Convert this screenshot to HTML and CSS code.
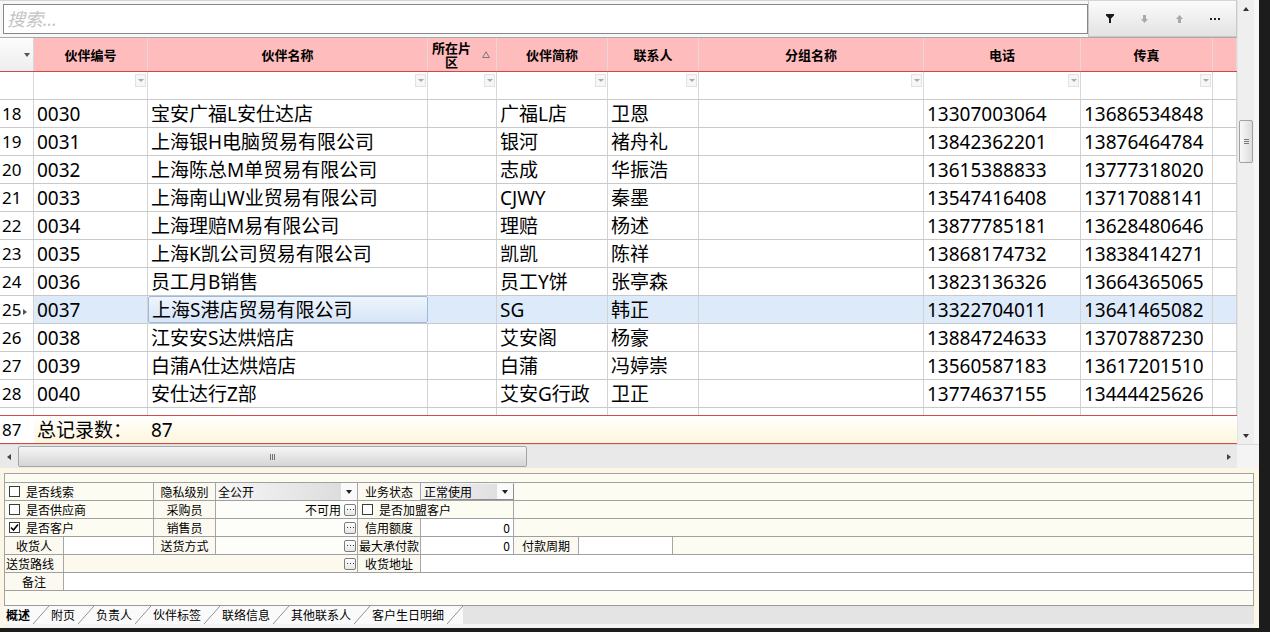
FILE: index.html
```html
<!DOCTYPE html>
<html lang="zh-CN">
<head>
  <meta charset="UTF-8">
  <title>伙伴资料</title>
  <link rel="stylesheet" href="styles.css">
</head>
<body>
<div class="app">
  <div class="upper">
    <div class="main">
      <div class="searchbar">
        <input class="search" type="text" placeholder="搜索...">
        <div class="tools">
          <span class="tb"><svg width="8" height="9" viewBox="0 0 8 9"><path d="M0 0H8V1.6L5 4.6V9H3V4.6L0 1.6Z" fill="#1a1a1a"/></svg></span>
          <span class="tb"><svg width="7" height="8" viewBox="0 0 7 8"><path d="M2 0H5V4H7L3.5 8L0 4H2Z" fill="#a9a9a9"/></svg></span>
          <span class="tb"><svg width="7" height="8" viewBox="0 0 7 8"><path d="M3.5 0L7 4H5V8H2V4H0Z" fill="#a9a9a9"/></svg></span>
          <span class="tb"><svg width="10" height="2" viewBox="0 0 10 2"><rect x="0" width="2" height="2" fill="#222"/><rect x="4" width="2" height="2" fill="#222"/><rect x="8" width="2" height="2" fill="#222"/></svg></span>
        </div>
      </div>

      <div class="grid">
        <div class="row head">
          <div class="h ind"><span class="tri-down"></span></div>
          <div class="h">伙伴编号</div>
          <div class="h">伙伴名称</div>
          <div class="h area"><span class="two">所在片<br>区</span><svg width="8" height="7" viewBox="0 0 8 7"><path d="M4 0.8L7.4 6.5H0.6Z" fill="none" stroke="#7a7a7a"/></svg></div>
          <div class="h">伙伴简称</div>
          <div class="h">联系人</div>
          <div class="h">分组名称</div>
          <div class="h">电话</div>
          <div class="h">传真</div>
          <div class="h"></div>
        </div>

        <div class="row filter">
          <div class="fc"></div>
          <div class="fc"><span class="dd"></span></div>
          <div class="fc"><span class="dd"></span></div>
          <div class="fc"><span class="dd"></span></div>
          <div class="fc"><span class="dd"></span></div>
          <div class="fc"><span class="dd"></span></div>
          <div class="fc"><span class="dd"></span></div>
          <div class="fc"><span class="dd"></span></div>
          <div class="fc"><span class="dd"></span></div>
          <div class="fc"></div>
        </div>

        <div class="body">
          <div class="row data"><div class="c num">18</div><div class="c">0030</div><div class="c">宝安广福L安仕达店</div><div class="c"></div><div class="c">广福L店</div><div class="c">卫恩</div><div class="c"></div><div class="c">13307003064</div><div class="c">13686534848</div><div class="c"></div></div>
          <div class="row data"><div class="c num">19</div><div class="c">0031</div><div class="c">上海银H电脑贸易有限公司</div><div class="c"></div><div class="c">银河</div><div class="c">褚舟礼</div><div class="c"></div><div class="c">13842362201</div><div class="c">13876464784</div><div class="c"></div></div>
          <div class="row data"><div class="c num">20</div><div class="c">0032</div><div class="c">上海陈总M单贸易有限公司</div><div class="c"></div><div class="c">志成</div><div class="c">华振浩</div><div class="c"></div><div class="c">13615388833</div><div class="c">13777318020</div><div class="c"></div></div>
          <div class="row data"><div class="c num">21</div><div class="c">0033</div><div class="c">上海南山W业贸易有限公司</div><div class="c"></div><div class="c">CJWY</div><div class="c">秦墨</div><div class="c"></div><div class="c">13547416408</div><div class="c">13717088141</div><div class="c"></div></div>
          <div class="row data"><div class="c num">22</div><div class="c">0034</div><div class="c">上海理赔M易有限公司</div><div class="c"></div><div class="c">理赔</div><div class="c">杨述</div><div class="c"></div><div class="c">13877785181</div><div class="c">13628480646</div><div class="c"></div></div>
          <div class="row data"><div class="c num">23</div><div class="c">0035</div><div class="c">上海K凯公司贸易有限公司</div><div class="c"></div><div class="c">凯凯</div><div class="c">陈祥</div><div class="c"></div><div class="c">13868174732</div><div class="c">13838414271</div><div class="c"></div></div>
          <div class="row data"><div class="c num">24</div><div class="c">0036</div><div class="c">员工月B销售</div><div class="c"></div><div class="c">员工Y饼</div><div class="c">张亭森</div><div class="c"></div><div class="c">13823136326</div><div class="c">13664365065</div><div class="c"></div></div>
          <div class="row data sel"><div class="c num">25<span class="cur"></span></div><div class="c">0037</div><div class="c focus">上海S港店贸易有限公司</div><div class="c"></div><div class="c">SG</div><div class="c">韩正</div><div class="c"></div><div class="c">13322704011</div><div class="c">13641465082</div><div class="c"></div></div>
          <div class="row data"><div class="c num">26</div><div class="c">0038</div><div class="c">江安安S达烘焙店</div><div class="c"></div><div class="c">艾安阁</div><div class="c">杨豪</div><div class="c"></div><div class="c">13884724633</div><div class="c">13707887230</div><div class="c"></div></div>
          <div class="row data"><div class="c num">27</div><div class="c">0039</div><div class="c">白蒲A仕达烘焙店</div><div class="c"></div><div class="c">白蒲</div><div class="c">冯婷崇</div><div class="c"></div><div class="c">13560587183</div><div class="c">13617201510</div><div class="c"></div></div>
          <div class="row data"><div class="c num">28</div><div class="c">0040</div><div class="c">安仕达行Z部</div><div class="c"></div><div class="c">艾安G行政</div><div class="c">卫正</div><div class="c"></div><div class="c">13774637155</div><div class="c">13444425626</div><div class="c"></div></div>
          <div class="row data"><div class="c num"></div><div class="c"></div><div class="c"></div><div class="c"></div><div class="c"></div><div class="c"></div><div class="c"></div><div class="c"></div><div class="c"></div><div class="c"></div></div>
        </div>

        <div class="row total">
          <div class="c num">87</div>
          <div class="c">总记录数：</div>
          <div class="c">87</div>
        </div>
      </div>
    </div>

    <div class="vscroll">
      <div class="sb-btn up"></div>
      <div class="vtrack">
        <div class="vthumb"><i></i><i></i><i></i></div>
      </div>
      <div class="sb-btn down"></div>
    </div>
  </div>

  <div class="hscroll">
    <div class="hs-btn left"></div>
    <div class="htrack">
      <div class="hthumb"><i></i><i></i><i></i></div>
    </div>
    <div class="hs-btn right"></div>
    <div class="corner"></div>
  </div>

  <div class="lower">
    <div class="panel">
      <div class="frow">
        <div class="f w1 chk"><span class="cb"></span>是否线索</div>
        <div class="f w2 lab">隐私级别</div>
        <div class="f w3 combo"><span>全公开</span><span class="arr"></span></div>
        <div class="f w4 lab">业务状态</div>
        <div class="f w5 combo raised"><span>正常使用</span><span class="arr"></span></div>
        <div class="f rest"></div>
      </div>
      <div class="frow">
        <div class="f w1 chk"><span class="cb"></span>是否供应商</div>
        <div class="f w2 lab">采购员</div>
        <div class="f w3 pick">不可用<span class="dots"><svg width="7" height="1" viewBox="0 0 7 1"><rect x="0" width="1" height="1" fill="#333"/><rect x="3" width="1" height="1" fill="#333"/><rect x="6" width="1" height="1" fill="#333"/></svg></span></div>
        <div class="f w45 chk"><span class="cb"></span>是否加盟客户</div>
        <div class="f rest"></div>
      </div>
      <div class="frow">
        <div class="f w1 chk"><span class="cb"><svg width="9" height="9" viewBox="0 0 9 9"><polyline points="1,4.5 3.5,7 8,1.5" fill="none" stroke="#000" stroke-width="1.6"/></svg></span>是否客户</div>
        <div class="f w2 lab">销售员</div>
        <div class="f w3 pick"><span class="dots"><svg width="7" height="1" viewBox="0 0 7 1"><rect x="0" width="1" height="1" fill="#333"/><rect x="3" width="1" height="1" fill="#333"/><rect x="6" width="1" height="1" fill="#333"/></svg></span></div>
        <div class="f w4 lab">信用额度</div>
        <div class="f w5 val">0</div>
        <div class="f rest"></div>
      </div>
      <div class="frow">
        <div class="f wa lab">收货人</div>
        <div class="f wb white"></div>
        <div class="f w2 lab">送货方式</div>
        <div class="f w3 pick"><span class="dots"><svg width="7" height="1" viewBox="0 0 7 1"><rect x="0" width="1" height="1" fill="#333"/><rect x="3" width="1" height="1" fill="#333"/><rect x="6" width="1" height="1" fill="#333"/></svg></span></div>
        <div class="f w4 lab l">最大承付款</div>
        <div class="f w5 val">0</div>
        <div class="f w6 lab">付款周期</div>
        <div class="f w7 white"></div>
        <div class="f rest"></div>
      </div>
      <div class="frow">
        <div class="f wa lab l">送货路线</div>
        <div class="f w8 pick cream"><span class="dots"><svg width="7" height="1" viewBox="0 0 7 1"><rect x="0" width="1" height="1" fill="#333"/><rect x="3" width="1" height="1" fill="#333"/><rect x="6" width="1" height="1" fill="#333"/></svg></span></div>
        <div class="f w4 lab">收货地址</div>
        <div class="f rest white"></div>
      </div>
      <div class="frow">
        <div class="f wa lab">备注</div>
        <div class="f rest white"></div>
      </div>
      <div class="ffill"></div>
    </div>

    <div class="tabs">
      <span class="tab on">概述</span><i class="sl"></i>
      <span class="tab">附页</span><i class="sl"></i>
      <span class="tab">负责人</span><i class="sl"></i>
      <span class="tab">伙伴标签</span><i class="sl"></i>
      <span class="tab">联络信息</span><i class="sl"></i>
      <span class="tab">其他联系人</span><i class="sl"></i>
      <span class="tab">客户生日明细</span><i class="sl"></i>
    </div>
    <div class="foot"></div>
  </div>
</div>
</body>
</html>
```

FILE: styles.css
```css
* {
  box-sizing: border-box;
}
body {
  margin: 0;
  background: #1c1c1c;
  font-family: "Noto Sans", "Noto Sans CJK SC", sans-serif;
  color: #000;
}
.app {
  width: 1259px;
  height: 628px;
  background: #f7f7f7;
  display: flex;
  flex-direction: column;
  overflow: hidden;
}

/* top: search + grid + vertical scrollbar */
.upper {
  display: flex;
  height: 444px;
}
.main {
  width: 1237px;
  display: flex;
  flex-direction: column;
}
.searchbar {
  height: 37px;
  display: flex;
  align-items: flex-start;
  background: #f7f7f7;
  border-top: 1px solid #d4d4d4;
}
.search {
  width: 1085px;
  height: 30px;
  margin: 3px 0 0 3px;
  padding: 0 3px;
  border: 1px solid #878787;
  background: #fff;
  outline: none;
  font: italic 18px "Noto Sans", "Noto Sans CJK SC", sans-serif;
}
.search::placeholder {
  color: #c4c4c4;
}
.tools {
  width: 149px;
  height: 36px;
  display: flex;
  padding-left: 3px;
  background: linear-gradient(#fbfbfb, #e3e3e3);
  border: 1px solid #c8c8c8;
  border-top: none;
}
.tb {
  width: 35px;
  display: flex;
  align-items: center;
  justify-content: center;
}

/* grid */
.grid {
  --cols: 34px 114px 280px 69px 111px 91px 225px 157px 132px 24px;
  flex: 1;
  display: flex;
  flex-direction: column;
  background: #fff;
}
.row {
  display: grid;
  grid-template-columns: var(--cols);
}
.head {
  height: 35px;
  background: #ffbcbc;
  border-top: 1px solid #a9a9a9;
  border-bottom: 1px solid #c94a4a;
}
.h {
  display: flex;
  align-items: center;
  justify-content: center;
  border-right: 1px solid #e6d8d8;
  font: bold 13px "Noto Sans CJK SC", sans-serif;
}
.h.ind {
  justify-content: flex-end;
  padding-right: 3px;
  background: linear-gradient(#fdfdfd, #ededed);
  border-right-color: #d8d8d8;
}
.tri-down {
  border-top: 4px solid #555;
  border-left: 3.5px solid transparent;
  border-right: 3.5px solid transparent;
}
.h.area {
  justify-content: flex-start;
  padding-left: 4px;
  gap: 11px;
}
.h .two {
  line-height: 14px;
  text-align: center;
}

.filter {
  height: 28px;
  border-bottom: 1px solid #cacaca;
}
.fc {
  display: flex;
  justify-content: flex-end;
  align-items: flex-start;
  padding: 2px 1px 0 0;
  border-right: 1px solid #d9d9d9;
}
.dd {
  width: 11px;
  height: 13px;
  display: flex;
  align-items: center;
  justify-content: center;
  border: 1px solid #e2e2e2;
  background: #f6f6f6;
}
.dd::after {
  content: "";
  border-top: 3px solid #ababab;
  border-left: 3.5px solid transparent;
  border-right: 3.5px solid transparent;
}

.body {
  height: 315px;
  overflow: hidden;
}
.data {
  height: 28px;
  border-bottom: 1px solid #c9c9c9;
}
.c {
  padding-left: 3px;
  border-right: 1px solid #d3d3d3;
  font-size: 19px;
  line-height: 28px;
  white-space: nowrap;
  overflow: hidden;
}
.c.num {
  padding-left: 2px;
  font-size: 17px;
  background: #fff;
}
.cur {
  display: inline-block;
  margin-left: 2px;
  vertical-align: 1px;
  border-left: 4px solid #555;
  border-top: 3.5px solid transparent;
  border-bottom: 3.5px solid transparent;
}
.sel .c {
  background: #ddeafa;
}
.sel .c.num {
  background: #fff;
}
.sel .c.focus {
  border: 1px solid #9cb9de;
  border-radius: 2px;
  line-height: 26px;
  background: linear-gradient(#eef5fd, #d6e5f8);
}

.total {
  height: 29px;
  border-top: 1px solid #d24b4b;
  border-bottom: 1px solid #d24b4b;
  background: linear-gradient(#fffffd, #fdf6de);
}
.total .c {
  border-right: none;
}

/* scrollbars */
.vscroll {
  width: 17px;
  display: flex;
  flex-direction: column;
  background: #efefef;
  border-left: 1px solid #e4e4e4;
}
.sb-btn {
  height: 17px;
  display: flex;
  align-items: center;
  justify-content: center;
}
.up::after {
  content: "";
  border-bottom: 4px solid #333;
  border-left: 3.5px solid transparent;
  border-right: 3.5px solid transparent;
}
.down::after {
  content: "";
  border-top: 4px solid #333;
  border-left: 3.5px solid transparent;
  border-right: 3.5px solid transparent;
}
.vtrack {
  flex: 1;
  display: flex;
  justify-content: center;
  align-items: flex-start;
  padding-top: 103px;
}
.vthumb {
  width: 14px;
  height: 43px;
  display: flex;
  flex-direction: column;
  justify-content: center;
  align-items: center;
  gap: 1px;
  border: 1px solid #a1a1a1;
  border-radius: 2px;
  background: linear-gradient(to right, #f8f8f8, #dcdcdc);
}
.vthumb i {
  width: 5px;
  height: 1px;
  background: #7a7a7a;
}

.hscroll {
  height: 24px;
  display: flex;
  background: #e9e9e9;
  border-top: 1px solid #dadada;
}
.hs-btn {
  width: 17px;
  display: flex;
  align-items: center;
  justify-content: center;
}
.left::after {
  content: "";
  border-right: 4px solid #444;
  border-top: 3.5px solid transparent;
  border-bottom: 3.5px solid transparent;
}
.right::after {
  content: "";
  border-left: 4px solid #444;
  border-top: 3.5px solid transparent;
  border-bottom: 3.5px solid transparent;
}
.htrack {
  flex: 1;
  display: flex;
  align-items: center;
  padding-left: 1px;
}
.hthumb {
  width: 509px;
  height: 21px;
  display: flex;
  justify-content: center;
  align-items: center;
  gap: 1px;
  border: 1px solid #a6a6a6;
  border-radius: 2px;
  background: linear-gradient(#f5f5f5, #d5d5d5);
}
.hthumb i {
  width: 1px;
  height: 6px;
  background: #6e6e6e;
}
.corner {
  width: 22px;
  background: #f4f4f4;
}

/* detail form */
.lower {
  flex: 1;
  display: flex;
  flex-direction: column;
  padding: 5px 5px 0 4px;
  background: #fbf6e5;
}
.panel {
  height: 132px;
  display: flex;
  flex-direction: column;
  padding-top: 8px;
  border: 1px solid #a3a3a3;
  border-bottom: none;
  background: #fdfcf3;
}
.frow {
  height: 18px;
  display: flex;
  border-bottom: 1px solid #a0a0a0;
  font: 12px "Noto Sans CJK SC", sans-serif;
  line-height: 17px;
}
.frow:first-child {
  height: 19px;
  border-top: 1px solid #a0a0a0;
}
.f {
  flex: none;
  display: flex;
  align-items: center;
  white-space: nowrap;
  border-right: 1px solid #a6a6a6;
}
.w1 { width: 149px; }
.w2 { width: 62px; }
.w3 { width: 142px; }
.w4 { width: 63px; }
.w5 { width: 93px; }
.w45 { width: 156px; }
.w6 { width: 65px; }
.w7 { width: 94px; }
.w8 { width: 294px; }
.wa { width: 59px; }
.wb { width: 90px; }
.rest {
  flex: 1;
  border-right: none;
}
.lab {
  justify-content: center;
  background: #fcfaf0;
}
.lab.l {
  justify-content: flex-start;
  padding-left: 1px;
}
.chk {
  gap: 6px;
  padding-left: 4px;
}
.cb {
  width: 11px;
  height: 11px;
  display: flex;
  align-items: center;
  justify-content: center;
  border: 1px solid #3c3c3c;
  background: #fff;
}
.pick {
  justify-content: flex-end;
  gap: 3px;
  padding-right: 1px;
  background: #fdfdf9;
}
.pick.cream {
  background: #fcfaee;
}
.dots {
  width: 12px;
  height: 12px;
  display: flex;
  align-items: center;
  justify-content: center;
  border: 1px solid #7d7d7d;
  border-radius: 2px;
  background: linear-gradient(#fff, #e6e6e6);
}
.val {
  justify-content: flex-end;
  padding-right: 3px;
  background: #fff;
}
.white {
  background: #fff;
}
.combo {
  justify-content: space-between;
  align-self: stretch;
  padding-left: 2px;
  background: linear-gradient(to right, #f7f7f7, #dadada);
}
.combo .arr {
  width: 16px;
  height: 100%;
  display: flex;
  align-items: center;
  justify-content: center;
  background: #fafafa;
}
.combo .arr::after {
  content: "";
  border-top: 4px solid #222;
  border-left: 3.5px solid transparent;
  border-right: 3.5px solid transparent;
}
.combo.raised {
  border: 1px solid #8e8e8e;
  border-top-color: #f4f4f4;
  border-left-color: #f4f4f4;
}
.ffill {
  flex: 1;
}

/* sheet tabs */
.tabs {
  height: 19px;
  display: flex;
  background: #e4e4e4;
  border-top: 1px solid #9a9a9a;
}
.tab {
  padding: 0 3px 0 2px;
  background: #fafafa;
  font: 12px "Noto Sans CJK SC", sans-serif;
  line-height: 18px;
}
.tab.on {
  font-weight: bold;
}
.sl {
  width: 16px;
  background: linear-gradient(to bottom right, #fafafa calc(50% - 0.7px), #8c8c8c 50%, #fafafa calc(50% + 0.7px));
}
.foot {
  height: 4px;
  background: #f3f3f3;
}
```
